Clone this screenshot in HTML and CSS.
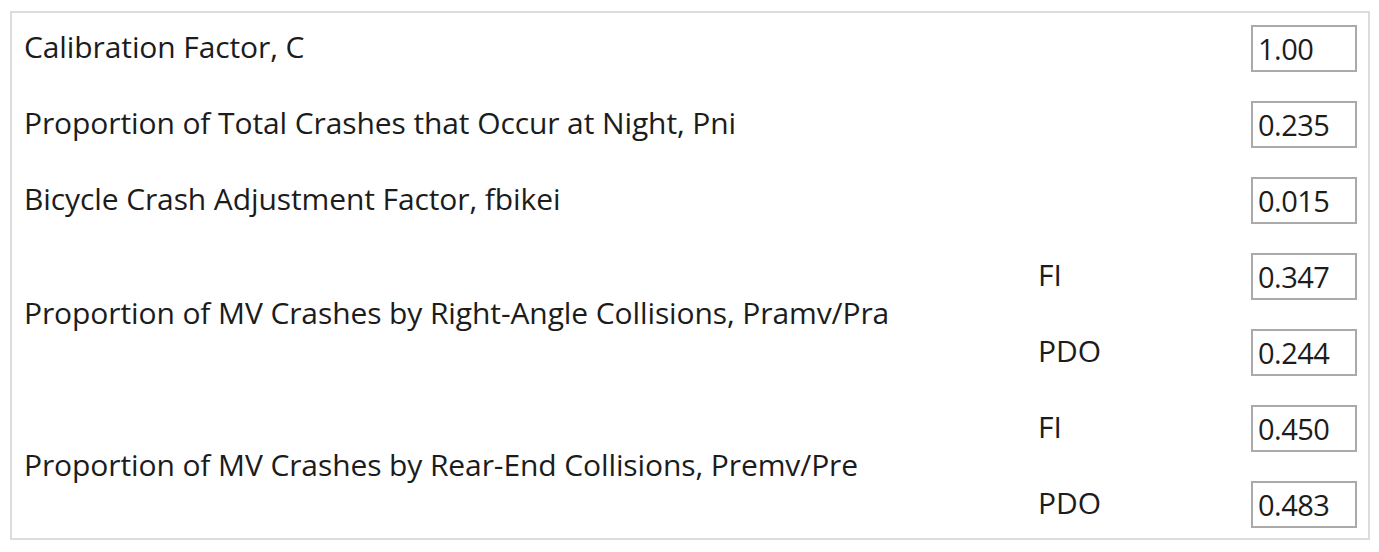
FILE: index.html
```html
<!DOCTYPE html>
<html lang="en">
<head>
  <meta charset="UTF-8">
  <title>Crash Parameters</title>
  <link rel="stylesheet" href="styles.css">
</head>
<body>

  <div class="panel">
    <div class="params">
      <div class="label">Calibration Factor, C</div>
      <div class="sub"></div>
      <input class="value" type="text" value="1.00">

      <div class="label">Proportion of Total Crashes that Occur at Night, Pni</div>
      <div class="sub"></div>
      <input class="value" type="text" value="0.235">

      <div class="label">Bicycle Crash Adjustment Factor, fbikei</div>
      <div class="sub"></div>
      <input class="value" type="text" value="0.015">

      <div class="label span2">Proportion of MV Crashes by Right-Angle Collisions, Pramv/Pra</div>
      <div class="sub">FI</div>
      <input class="value" type="text" value="0.347">
      <div class="sub">PDO</div>
      <input class="value" type="text" value="0.244">

      <div class="label span2">Proportion of MV Crashes by Rear-End Collisions, Premv/Pre</div>
      <div class="sub">FI</div>
      <input class="value" type="text" value="0.450">
      <div class="sub">PDO</div>
      <input class="value" type="text" value="0.483">
    </div>
  </div>

</body>
</html>
```

FILE: styles.css
```css
body {
  margin: 0;
  padding: 11px 9px 11px 10px;
  background: #ffffff;
  font-family: 'Open Sans', 'Noto Sans', sans-serif;
  color: #1c1c1c;
}

.panel {
  border: 2px solid #dcdcdc;
  padding: 12px 11px 12px 12px;
  height: 529px;
  box-sizing: border-box;
}

.params {
  display: grid;
  grid-template-columns: 1fr 214px 106px;
  grid-auto-rows: 47px;
  row-gap: 29px;
  align-items: center;
}

.label {
  font-size: 30px;
  line-height: 47px;
  letter-spacing: -0.1px;
  white-space: nowrap;
  padding-bottom: 4px;
}

.span2 {
  grid-row: span 2;
}

.sub {
  font-size: 30px;
  padding-left: 1px;
  padding-bottom: 4px;
}

.value {
  width: 106px;
  height: 47px;
  box-sizing: border-box;
  border: 2px solid #aaaaaa;
  padding: 0 5px;
  font-family: inherit;
  font-size: 29px;
  letter-spacing: -0.5px;
  color: #1c1c1c;
  outline: none;
}
```
